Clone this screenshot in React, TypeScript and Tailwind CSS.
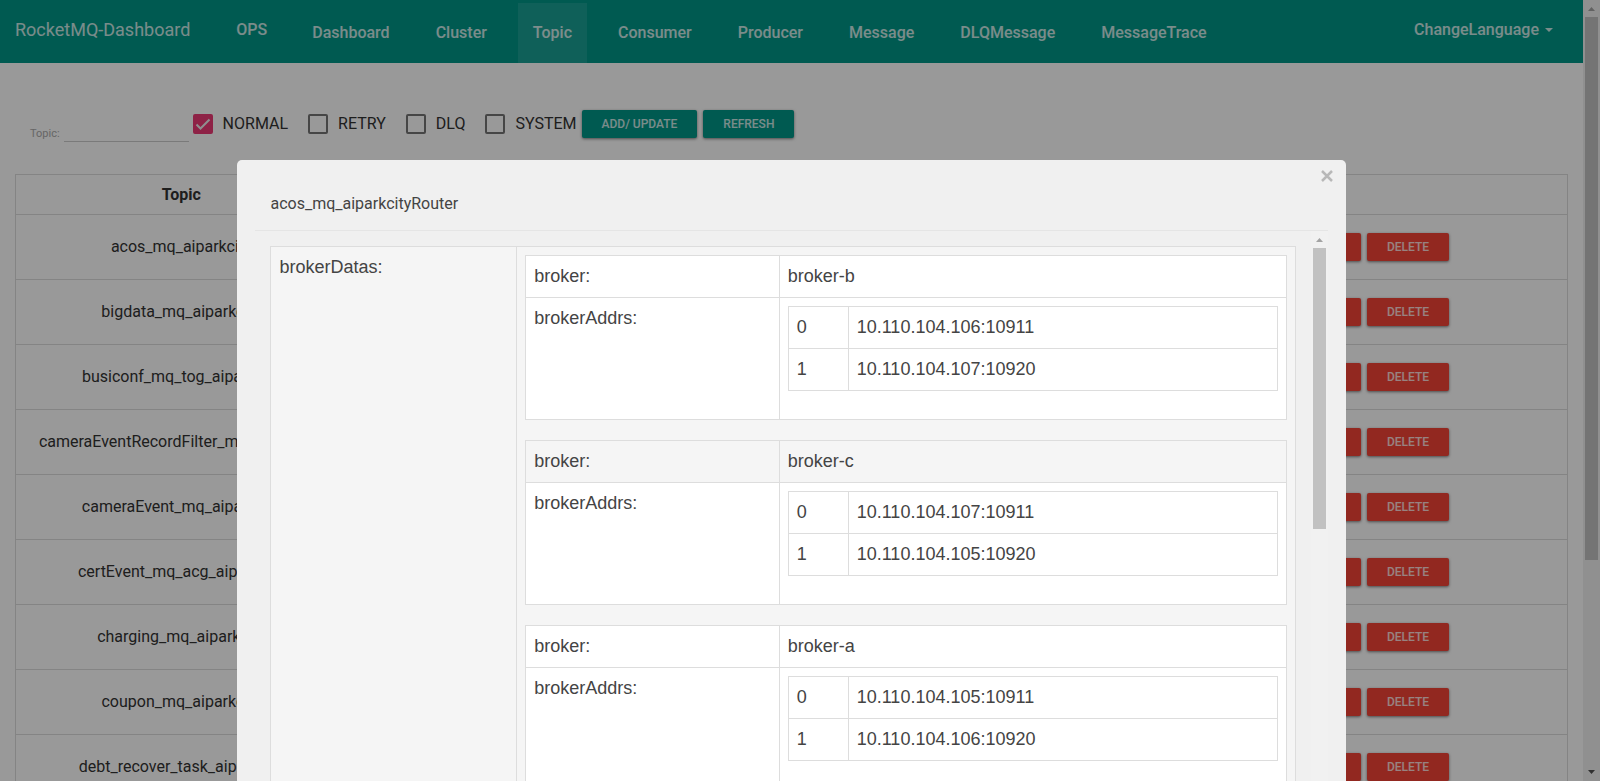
import React from "react";

const navItems = ["Dashboard", "Cluster", "Topic", "Consumer", "Producer", "Message", "DLQMessage", "MessageTrace"];

const topics = [
  "acos_mq_aiparkcity",
  "bigdata_mq_aiparkcity",
  "busiconf_mq_tog_aiparkcity",
  "cameraEventRecordFilter_mq_aiparkcity",
  "cameraEvent_mq_aiparkcity",
  "certEvent_mq_acg_aiparkcity",
  "charging_mq_aiparkcity",
  "coupon_mq_aiparkcity",
  "debt_recover_task_aiparkcity",
];

const filters = [
  { name: "NORMAL", checked: true },
  { name: "RETRY", checked: false },
  { name: "DLQ", checked: false },
  { name: "SYSTEM", checked: false },
];

const brokers = [
  { name: "broker-b", striped: false, addrs: ["10.110.104.106:10911", "10.110.104.107:10920"] },
  { name: "broker-c", striped: true, addrs: ["10.110.104.107:10911", "10.110.104.105:10920"] },
  { name: "broker-a", striped: false, addrs: ["10.110.104.105:10911", "10.110.104.106:10920"] },
];

function RaisedButton({ tone, children }: { tone: "teal" | "red"; children: React.ReactNode }) {
  const color = tone === "teal" ? "bg-[#009688]" : "bg-[#f44336]";
  return (
    <button
      type="button"
      className={`h-7 shrink-0 rounded-[2px] px-5 text-xs font-medium text-white/80 uppercase shadow-[0_1px_3px_rgba(0,0,0,0.5)] ${color}`}
    >
      {children}
    </button>
  );
}

function Filter({ name, checked }: { name: string; checked: boolean }) {
  return (
    <label className="flex items-center gap-[10px] text-[#333]">
      <span className="grid size-5">
        <input
          type="checkbox"
          defaultChecked={checked}
          className="peer col-start-1 row-start-1 size-5 appearance-none rounded-[2px] border-2 border-[#757575] checked:border-[#ed3a75] checked:bg-[#ed3a75]"
        />
        <svg viewBox="0 0 20 20" className="pointer-events-none col-start-1 row-start-1 hidden size-5 peer-checked:block" fill="none" stroke="#eeeeee" strokeWidth="2">
          <path d="M3.5 10.5 L7.5 14.5 L16.5 5.5" />
        </svg>
      </span>
      {name}
    </label>
  );
}

function Navbar() {
  return (
    <nav className="flex h-[63px] shrink-0 justify-between bg-[#009688] px-[15px] font-medium text-white/80">
      <div className="flex">
        <a href="#home" className="pt-[17px] pr-[31px] text-lg leading-[25px] font-normal">RocketMQ-Dashboard</a>
        <a href="#ops" className="px-[15px] pt-[17px] leading-[25px]">OPS</a>
        <ul className="flex gap-4 pt-[3px] pl-[15px]">
          {navItems.map((item) => (
            <li key={item} className="flex">
              <a href={`#${item}`} className={`flex items-center px-[15px] ${item === "Topic" ? "bg-white/10" : ""}`}>
                {item}
              </a>
            </li>
          ))}
        </ul>
      </div>
      <button type="button" className="flex h-[60px] items-center gap-[6px] pr-[15px]">
        ChangeLanguage
        <svg viewBox="0 0 8 4" className="w-2" fill="currentColor"><path d="M0 0H8L4 4Z" /></svg>
      </button>
    </nav>
  );
}

function PageScrollbar() {
  return (
    <div className="flex w-[17px] shrink-0 flex-col items-center justify-between bg-[#f1f1f1]">
      <div className="flex h-full w-[13px] flex-col items-center">
        <svg viewBox="0 0 17 17" className="size-[17px]" fill="#a3a3a3"><path d="M5 11H12L8.500 7Z" /></svg>
        <div className="h-[543px] w-[13px] bg-[#c1c1c1]" />
      </div>
      <svg viewBox="0 0 17 17" className="size-[17px] shrink-0" fill="#505050"><path d="M5 6H12L8.500 10Z" /></svg>
    </div>
  );
}

function BrokerTable({ name, striped, addrs }: { name: string; striped: boolean; addrs: string[] }) {
  return (
    <table className="mb-5 w-full table-fixed border-collapse border border-[#ddd] bg-white">
      <tbody>
        <tr className={striped ? "bg-[#f5f5f5]" : ""}>
          <td className="w-1/3 border border-[#ddd] p-2">broker:</td>
          <td className="border border-[#ddd] p-2">{name}</td>
        </tr>
        <tr>
          <td className="border border-[#ddd] p-2 align-top">brokerAddrs:</td>
          <td className="border border-[#ddd] p-2">
            <table className="mb-5 w-full border-collapse border border-[#ddd]">
              <tbody>
                {addrs.map((addr, i) => (
                  <tr key={addr}>
                    <td className="w-[60px] border border-[#ddd] p-2">{i}</td>
                    <td className="border border-[#ddd] p-2">{addr}</td>
                  </tr>
                ))}
              </tbody>
            </table>
          </td>
        </tr>
      </tbody>
    </table>
  );
}

function RouterDialog() {
  return (
    <div className="fixed inset-0 flex items-start justify-center overflow-hidden bg-black/40 pt-40 pr-[17px]">
      <section
        role="dialog"
        aria-labelledby="router-title"
        className="relative flex h-[800px] w-[70%] shrink-0 flex-col rounded-t-[5px] bg-[#f0f0f0] px-[18px] pt-[18px] text-[#444]"
      >
        <button type="button" aria-label="Close" className="absolute top-[9px] right-3 flex size-[14px] items-center justify-center">
          <svg viewBox="0 0 12 12" className="size-3" fill="none" stroke="#b8b8b8" strokeWidth="2.500"><path d="M1 1L11 11M11 1L1 11" /></svg>
        </button>
        <h4 id="router-title" className="border-b border-[#e5e5e5] px-[15px] pt-[14px] pb-[14px] leading-6">
          acos_mq_aiparkcityRouter
        </h4>
        <div className="flex min-h-0 flex-1">
          <div className="min-w-0 flex-1 overflow-hidden p-[15px] font-['Liberation_Sans',Arial,sans-serif] text-lg leading-[25px]">
            <table className="w-full table-fixed border-collapse border border-[#ddd] bg-[#f5f5f5]">
              <tbody>
                <tr>
                  <td className="w-[24%] border border-[#ddd] p-2 align-top">brokerDatas:</td>
                  <td className="border border-[#ddd] p-2">
                    {brokers.map((b) => <BrokerTable key={b.name} {...b} />)}
                  </td>
                </tr>
              </tbody>
            </table>
          </div>
          <div className="flex w-[17px] flex-col items-center bg-[#f1f1f1]">
            <svg viewBox="0 0 17 17" className="size-[17px]" fill="#a3a3a3"><path d="M5 11H12L8.500 7Z" /></svg>
            <div className="h-[281px] w-[13px] bg-[#c1c1c1]" />
          </div>
        </div>
      </section>
    </div>
  );
}

export default function App() {
  return (
    <div className="flex h-screen overflow-hidden bg-white font-[Roboto,sans-serif] text-base">
      <div className="flex min-w-0 flex-1 flex-col overflow-hidden">
        <Navbar />
        <main className="px-[15px] pt-[47px]">
          <form className="flex h-7 items-center pl-[15px]">
            <div className="flex items-end gap-1 pt-[5px] pr-1">
              <label htmlFor="topic-filter" className="text-[11px] leading-4 text-[#aaa]">Topic:</label>
              <input id="topic-filter" type="text" className="h-[30px] w-[125px] border-b border-[#ccc] bg-transparent" />
            </div>
            <div className="flex gap-5 pr-[5px]">
              {filters.map((f) => <Filter key={f.name} {...f} />)}
            </div>
            <div className="flex gap-[6px]">
              <RaisedButton tone="teal">Add/ Update</RaisedButton>
              <RaisedButton tone="teal">Refresh</RaisedButton>
            </div>
          </form>
          <table className="mt-9 w-full table-fixed border-collapse border border-[#ddd] text-center text-[#333]">
            <thead>
              <tr className="h-10">
                <th className="w-[331px] border-b border-[#ddd] font-bold">Topic</th>
                <th className="border-b border-[#ddd] font-bold">Operation</th>
              </tr>
            </thead>
            <tbody>
              {topics.map((topic) => (
                <tr key={topic} className="h-[65px] border-b border-[#ddd]">
                  <td>{topic}</td>
                  <td>
                    <div className="flex justify-end gap-[6px] pr-[118px]">
                      <RaisedButton tone="red">Skip Message Accumulate</RaisedButton>
                      <RaisedButton tone="red">Delete</RaisedButton>
                    </div>
                  </td>
                </tr>
              ))}
            </tbody>
          </table>
        </main>
      </div>
      <PageScrollbar />
      <RouterDialog />
    </div>
  );
}
